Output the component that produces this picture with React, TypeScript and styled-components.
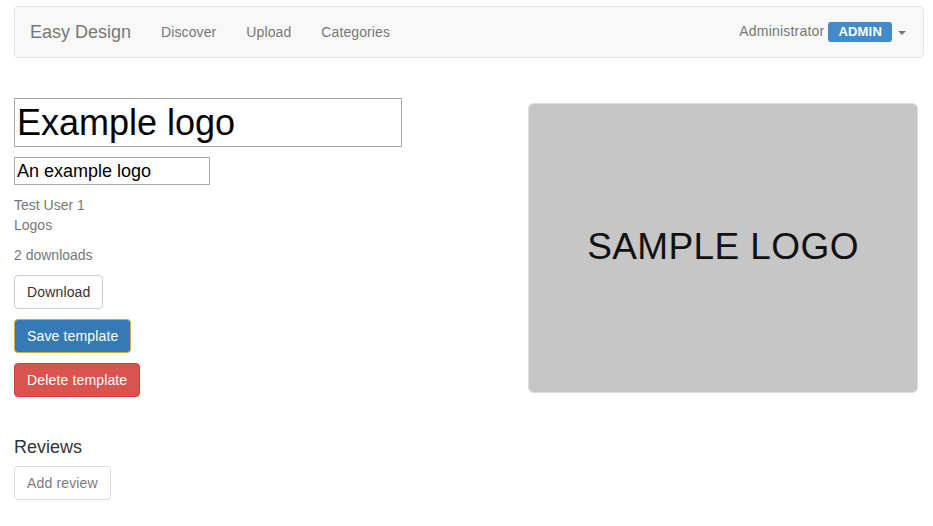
import React from "react";
import styled, { createGlobalStyle } from "styled-components";

const Global = createGlobalStyle`
  html, body { margin: 0; padding: 0; background: #fff; }
  body {
    font-family: "Liberation Sans", Arial, Helvetica, sans-serif;
    font-size: 14px;
    line-height: 1.42857;
    color: #333;
  }
  * { box-sizing: border-box; }
`;

const Page = styled.div`
  padding: 6px 9px 0 14px;
`;

const Navbar = styled.nav`
  display: flex;
  align-items: center;
  height: 52px;
  background: #f8f8f8;
  border: 1px solid #e7e7e7;
  border-radius: 4px;
  padding: 0 17px 0 0;
`;

const Brand = styled.a`
  padding: 0 15px;
  font-size: 18px;
  line-height: 20px;
  color: #777;
  text-decoration: none;
`;

const NavLink = styled.a`
  padding: 0 15px;
  font-size: 14px;
  line-height: 20px;
  color: #777;
  text-decoration: none;
  letter-spacing: 0.1px;
`;

const Spacer = styled.div`
  flex: 1;
`;

const UserMenu = styled.div`
  display: flex;
  align-items: center;
  color: #777;
  font-size: 14px;
  letter-spacing: 0.2px;
`;

const Badge = styled.span`
  display: inline-block;
  margin-left: 4px;
  padding: 3px 10px;
  background: #428bca;
  color: #fff;
  font-weight: bold;
  font-size: 13px;
  line-height: 14px;
  border-radius: 3px;
  letter-spacing: 0.2px;
`;

const Caret = styled.span`
  display: inline-block;
  margin-left: 6px;
  margin-top: 2px;
  width: 0;
  height: 0;
  border-top: 4px solid #777;
  border-left: 4px solid transparent;
  border-right: 4px solid transparent;
`;

const Main = styled.div`
  display: flex;
  align-items: flex-start;
  margin-top: 40px;
`;

const Left = styled.div`
  flex: 1;
  display: flex;
  flex-direction: column;
  align-items: flex-start;
`;

const TitleInput = styled.input`
  width: 388px;
  height: 49px;
  margin: 0;
  padding: 0 2px;
  border: 1px solid #a9a9a9;
  font-family: Arial, "Liberation Sans", sans-serif;
  font-size: 36px;
  color: #000;
  outline: none;
`;

const DescInput = styled.input`
  width: 196px;
  height: 28px;
  margin: 10px 0 0;
  padding: 0 2px;
  border: 1px solid #a9a9a9;
  font-family: Arial, "Liberation Sans", sans-serif;
  font-size: 18px;
  color: #000;
  outline: none;
`;

const Meta = styled.div<{ $gap?: number }>`
  color: #777;
  font-size: 14px;
  line-height: 20px;
  margin-top: ${(p) => p.$gap ?? 0}px;
`;

type Variant = "default" | "primary" | "danger";

const Button = styled.button<{ $variant?: Variant; $focused?: boolean; $disabled?: boolean; $gap?: number }>`
  display: inline-block;
  height: 34px;
  padding: 6px 12px;
  font-family: "Liberation Sans", Arial, sans-serif;
  font-size: 14px;
  line-height: 20px;
  letter-spacing: 0.15px;
  border-radius: 4px;
  border: 1px solid
    ${(p) =>
      p.$focused ? "#d9a840" : p.$variant === "primary" ? "#2e6da4" : p.$variant === "danger" ? "#d43f3a" : "#ccc"};
  background: ${(p) => (p.$variant === "primary" ? "#337ab7" : p.$variant === "danger" ? "#d9534f" : "#fff")};
  color: ${(p) => (p.$variant === "default" || !p.$variant ? "#333" : "#fff")};
  opacity: ${(p) => (p.$disabled ? 0.65 : 1)};
  cursor: pointer;
  margin-top: ${(p) => p.$gap ?? 10}px;
`;

const Heading = styled.h3`
  margin: 38px 0 0;
  font-size: 18px;
  font-weight: 500;
  line-height: 24px;
  color: #333;
`;

const Thumb = styled.div`
  width: 390px;
  height: 290px;
  margin: 5px 6px 0 0;
  background: #c6c6c6;
  border: 1px solid #ddd;
  border-radius: 6px;
  display: flex;
  align-items: center;
  justify-content: center;
`;

const LogoText = styled.span`
  font-family: "Liberation Sans", Arial, sans-serif;
  font-size: 37px;
  color: #111;
  margin-top: -2px;
  letter-spacing: 0.4px;
`;

export default function App() {
  return (
    <>
      <Global />
      <Page>
        <Navbar>
          <Brand>Easy Design</Brand>
          <NavLink>Discover</NavLink>
          <NavLink>Upload</NavLink>
          <NavLink>Categories</NavLink>
          <Spacer />
          <UserMenu>
            Administrator <Badge>ADMIN</Badge>
            <Caret />
          </UserMenu>
        </Navbar>
        <Main>
          <Left>
            <TitleInput defaultValue="Example logo" />
            <DescInput defaultValue="An example logo" />
            <Meta $gap={10}>Test User 1</Meta>
            <Meta>Logos</Meta>
            <Meta $gap={10}>2 downloads</Meta>
            <Button $variant="default">Download</Button>
            <Button $variant="primary" $focused>Save template</Button>
            <Button $variant="danger">Delete template</Button>
            <Heading>Reviews</Heading>
            <Button $variant="default" $disabled $gap={7}>Add review</Button>
          </Left>
          <Thumb>
            <LogoText>SAMPLE LOGO</LogoText>
          </Thumb>
        </Main>
      </Page>
    </>
  );
}
